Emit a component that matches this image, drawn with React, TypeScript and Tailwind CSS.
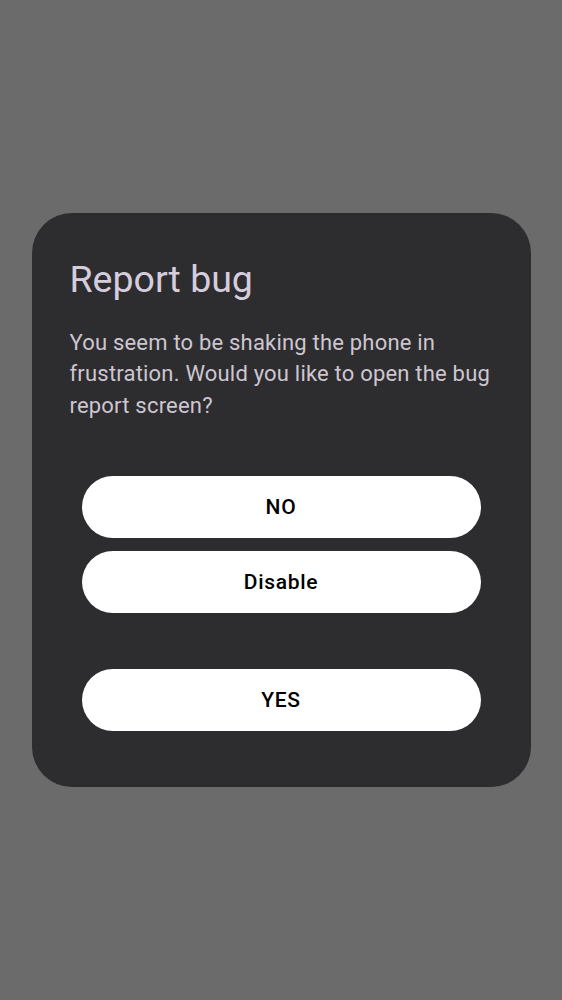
export default function App() {
  return (
    <div className="min-h-screen w-full bg-[#6b6b6b] flex items-center justify-center font-['Roboto',sans-serif]">
      <div className="w-[499px] rounded-[40px] bg-[#2d2d2f] pt-[44px] pb-[56px]">
        <h1 className="px-[38px] text-[37.5px] leading-[44px] text-[#d5cddd]">Report bug</h1>
        <p className="mt-[26px] px-[38px] text-[22px] leading-[31.5px] tracking-[0.2px] text-[#cdc6d1]">
          You seem to be shaking the phone in frustration. Would you like to open the bug report screen?
        </p>
        <div className="mt-[55px] px-[50px] flex flex-col">
          <button className="h-[62px] rounded-full bg-white text-[21px] font-medium tracking-[0.7px] text-black">NO</button>
          <button className="mt-[13px] h-[62px] rounded-full bg-white text-[21px] font-medium tracking-[0.7px] text-black">Disable</button>
          <button className="mt-[56px] h-[62px] rounded-full bg-white text-[21px] font-medium tracking-[0.7px] text-black">YES</button>
        </div>
      </div>
    </div>
  )
}
